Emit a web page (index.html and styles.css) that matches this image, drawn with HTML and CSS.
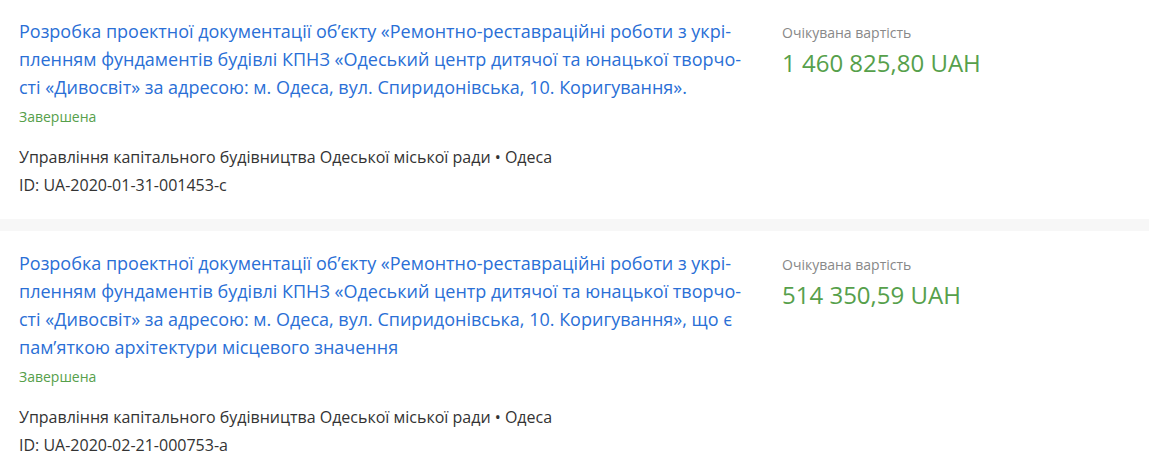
FILE: index.html
```html
<!DOCTYPE html>
<html lang="uk">
<head>
<meta charset="utf-8">
<title>Tenders</title>
<link rel="stylesheet" href="styles.css">
</head>
<body>
<div class="list">
  <div class="card card-first">
    <div class="main">
      <a class="title" href="#">Розробка проектної документації об’єкту «Ремонтно-реставраційні роботи з укрі&shy;пленням фундаментів будівлі КПНЗ «Одеський центр дитячої та юнацької творчо&shy;сті «Дивосвіт» за адресою: м. Одеса, вул. Спиридонівська, 10. Коригування».</a>
      <div class="status">Завершена</div>
      <div class="org">Управління капітального будівництва Одеської міської ради • Одеса</div>
      <div class="id">ID: UA-2020-01-31-001453-c</div>
    </div>
    <div class="side">
      <div class="label">Очікувана вартість</div>
      <div class="amount">1 460 825,80 UAH</div>
    </div>
  </div>
  <div class="card">
    <div class="main">
      <a class="title" href="#">Розробка проектної документації об’єкту «Ремонтно-реставраційні роботи з укрі&shy;пленням фундаментів будівлі КПНЗ «Одеський центр дитячої та юнацької творчо&shy;сті «Дивосвіт» за адресою: м. Одеса, вул. Спиридонівська, 10. Коригування», що є пам’яткою архітектури місцевого значення</a>
      <div class="status">Завершена</div>
      <div class="org">Управління капітального будівництва Одеської міської ради • Одеса</div>
      <div class="id">ID: UA-2020-02-21-000753-a</div>
    </div>
    <div class="side">
      <div class="label">Очікувана вартість</div>
      <div class="amount">514 350,59 UAH</div>
    </div>
  </div>
</div>
</body>
</html>
```
FILE: styles.css
```css
html, body {
  margin: 0;
  padding: 0;
  background: #ffffff;
}
body {
  font-family: "Open Sans", "Noto Sans", sans-serif;
  color: #333333;
}
.list {
  display: flex;
  flex-direction: column;
  gap: 12px;
  background: #f7f7f7;
}
.card {
  background: #ffffff;
  display: grid;
  grid-template-columns: 743px 1fr;
  column-gap: 20px;
  padding: 18px 20px 20px 19px;
}
.card-first {
  padding-top: 17px;
}
.title {
  display: block;
  width: 728px;
  font-size: 18px;
  line-height: 28px;
  color: #2a6fd6;
  text-decoration: none;
}
.status {
  font-size: 14px;
  line-height: 20px;
  color: #56a04b;
  margin-top: 6px;
}
.org, .id {
  font-size: 16px;
  line-height: 28px;
  color: #333333;
}
.org {
  margin-top: 16px;
}
.side {
  padding-top: 6px;
}
.label {
  font-size: 14px;
  line-height: 20px;
  color: #888888;
}
.amount {
  font-size: 24px;
  line-height: 36px;
  color: #56a04b;
  margin-top: 2px;
}
```
